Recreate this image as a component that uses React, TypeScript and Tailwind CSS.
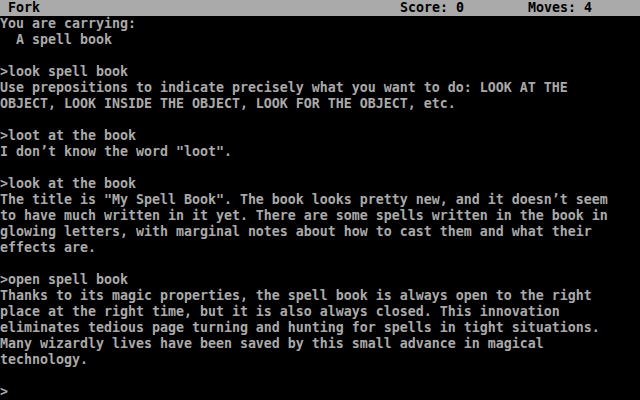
import React from 'react';

const lines: string[] = [
  'You are carrying:',
  '  A spell book',
  '',
  '>look spell book',
  'Use prepositions to indicate precisely what you want to do: LOOK AT THE',
  'OBJECT, LOOK INSIDE THE OBJECT, LOOK FOR THE OBJECT, etc.',
  '',
  '>loot at the book',
  'I don’t know the word "loot".',
  '',
  '>look at the book',
  'The title is "My Spell Book". The book looks pretty new, and it doesn’t seem',
  'to have much written in it yet. There are some spells written in the book in',
  'glowing letters, with marginal notes about how to cast them and what their',
  'effects are.',
  '',
  '>open spell book',
  'Thanks to its magic properties, the spell book is always open to the right',
  'place at the right time, but it is also always closed. This innovation',
  'eliminates tedious page turning and hunting for spells in tight situations.',
  'Many wizardly lives have been saved by this small advance in magical',
  'technology.',
  '',
  '>',
];

const StatusBar: React.FC<{ room: string; score: number; moves: number }> = ({ room, score, moves }) => (
  <div className="flex h-4 bg-[#aaaaaa] text-black whitespace-pre">
    <span className="w-[400px] pl-2">{room}</span>
    <span className="w-[128px]">Score: {score}</span>
    <span>Moves: {moves}</span>
  </div>
);

export default function App() {
  return (
    <div
      className="w-[640px] h-[400px] overflow-hidden bg-black text-[#aaaaaa] text-[13.29px] leading-4 font-bold"
      style={{ fontFamily: '"DejaVu Sans Mono", "Liberation Mono", monospace' }}
    >
      <StatusBar room="Fork" score={0} moves={4} />
      {/* Transcript */}
      <div className="flex flex-col">
        {lines.map((line, i) => (
          <div key={i} className="h-4 whitespace-pre">
            {line}
          </div>
        ))}
      </div>
    </div>
  );
}
